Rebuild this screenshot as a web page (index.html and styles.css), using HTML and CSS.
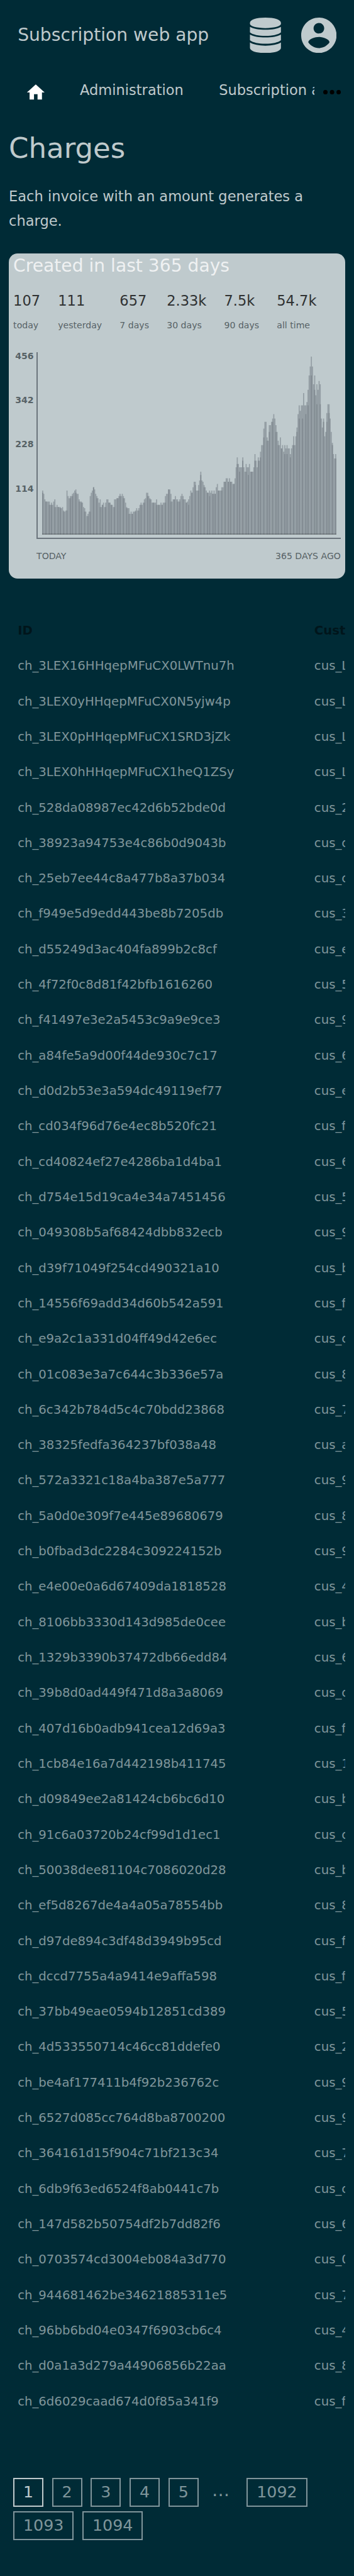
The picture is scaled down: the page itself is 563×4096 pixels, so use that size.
FILE: index.html
```html
<!DOCTYPE html>
<html lang="en">
<head>
<meta charset="utf-8">
<title>Charges</title>
<link rel="stylesheet" href="styles.css">
</head>
<body>
<header class="header">
  <div class="brand">Subscription web app</div>
  <svg class="header-icon" viewBox="-32 0 512 512"><path d="M0 76C0 30 90 0 224 0s224 30 224 76v16c0 34-100 60-224 60S0 126 0 92zM0 133c50 28 130 41 224 41s174-13 224-41v80c-40 33-125 51-224 51S40 246 0 213zM0 246c50 28 130 41 224 41s174-13 224-41v81c-40 33-125 51-224 51S40 360 0 327zM0 360c50 30 130 46 224 46s174-16 224-46v76c0 46-90 76-224 76S0 482 0 436z"/></svg>
  <svg class="header-icon" viewBox="2 2 20 20"><path fill-rule="evenodd" d="M12 2C6.480 2 2 6.480 2 12s4.480 10 10 10 10-4.480 10-10S17.520 2 12 2zm0 3c1.660 0 3 1.340 3 3s-1.340 3-3 3-3-1.340-3-3 1.340-3 3-3zm0 14.200c-2.500 0-4.710-1.280-6-3.220.030-1.990 4-3.080 6-3.080 1.990 0 5.970 1.090 6 3.080-1.290 1.940-3.500 3.220-6 3.220z"/></svg>
</header>
<nav class="nav">
  <div class="nav-items">
    <svg class="home" viewBox="0 0 24 24"><path d="M10 20v-6h4v6h5v-8h3L12 3 2 12h3v8z"/></svg>
    <span>Administration</span>
    <span>Subscription a</span>
  </div>
  <svg class="more" viewBox="0 0 32 8"><circle cx="4" cy="4" r="4"/><circle cx="16" cy="4" r="4"/><circle cx="28" cy="4" r="4"/></svg>
</nav>
<main class="main">
  <h1>Charges</h1>
  <p class="intro">Each invoice with an amount generates a charge.</p>
  <section class="card">
    <h2>Created in last 365 days</h2>
    <div class="stats">
      <div><b>107</b><small>today</small></div>
      <div><b>111</b><small>yesterday</small></div>
      <div><b>657</b><small>7 days</small></div>
      <div><b>2.33k</b><small>30 days</small></div>
      <div><b>7.5k</b><small>90 days</small></div>
      <div><b>54.7k</b><small>all time</small></div>
    </div>
    <div class="chart">
      <div class="y-axis"><span>456</span><span>342</span><span>228</span><span>114</span></div>
      <div class="plot">
        <svg viewBox="0 0 266 161" preserveAspectRatio="none"><path id="bars"/><path id="overlap"/><path d="M0 160h266v1H0z" class="base"/></svg>
      </div>
    </div>
    <div class="x-axis"><span>TODAY</span><span>365 DAYS AGO</span></div>
  </section>
  <table class="table">
    <thead><tr><th>ID</th><th>Cust</th></tr></thead>
    <tbody>
      <tr><td>ch_3LEX16HHqepMFuCX0LWTnu7h</td><td>cus_L</td></tr>
      <tr><td>ch_3LEX0yHHqepMFuCX0N5yjw4p</td><td>cus_L</td></tr>
      <tr><td>ch_3LEX0pHHqepMFuCX1SRD3jZk</td><td>cus_L</td></tr>
      <tr><td>ch_3LEX0hHHqepMFuCX1heQ1ZSy</td><td>cus_L</td></tr>
      <tr><td>ch_528da08987ec42d6b52bde0d</td><td>cus_2</td></tr>
      <tr><td>ch_38923a94753e4c86b0d9043b</td><td>cus_c</td></tr>
      <tr><td>ch_25eb7ee44c8a477b8a37b034</td><td>cus_c</td></tr>
      <tr><td>ch_f949e5d9edd443be8b7205db</td><td>cus_3</td></tr>
      <tr><td>ch_d55249d3ac404fa899b2c8cf</td><td>cus_e</td></tr>
      <tr><td>ch_4f72f0c8d81f42bfb1616260</td><td>cus_5</td></tr>
      <tr><td>ch_f41497e3e2a5453c9a9e9ce3</td><td>cus_9</td></tr>
      <tr><td>ch_a84fe5a9d00f44de930c7c17</td><td>cus_6</td></tr>
      <tr><td>ch_d0d2b53e3a594dc49119ef77</td><td>cus_e</td></tr>
      <tr><td>ch_cd034f96d76e4ec8b520fc21</td><td>cus_f</td></tr>
      <tr><td>ch_cd40824ef27e4286ba1d4ba1</td><td>cus_6</td></tr>
      <tr><td>ch_d754e15d19ca4e34a7451456</td><td>cus_5</td></tr>
      <tr><td>ch_049308b5af68424dbb832ecb</td><td>cus_9</td></tr>
      <tr><td>ch_d39f71049f254cd490321a10</td><td>cus_b</td></tr>
      <tr><td>ch_14556f69add34d60b542a591</td><td>cus_f</td></tr>
      <tr><td>ch_e9a2c1a331d04ff49d42e6ec</td><td>cus_c</td></tr>
      <tr><td>ch_01c083e3a7c644c3b336e57a</td><td>cus_8</td></tr>
      <tr><td>ch_6c342b784d5c4c70bdd23868</td><td>cus_7</td></tr>
      <tr><td>ch_38325fedfa364237bf038a48</td><td>cus_a</td></tr>
      <tr><td>ch_572a3321c18a4ba387e5a777</td><td>cus_9</td></tr>
      <tr><td>ch_5a0d0e309f7e445e89680679</td><td>cus_8</td></tr>
      <tr><td>ch_b0fbad3dc2284c309224152b</td><td>cus_9</td></tr>
      <tr><td>ch_e4e00e0a6d67409da1818528</td><td>cus_4</td></tr>
      <tr><td>ch_8106bb3330d143d985de0cee</td><td>cus_b</td></tr>
      <tr><td>ch_1329b3390b37472db66edd84</td><td>cus_6</td></tr>
      <tr><td>ch_39b8d0ad449f471d8a3a8069</td><td>cus_c</td></tr>
      <tr><td>ch_407d16b0adb941cea12d69a3</td><td>cus_f</td></tr>
      <tr><td>ch_1cb84e16a7d442198b411745</td><td>cus_1</td></tr>
      <tr><td>ch_d09849ee2a81424cb6bc6d10</td><td>cus_b</td></tr>
      <tr><td>ch_91c6a03720b24cf99d1d1ec1</td><td>cus_c</td></tr>
      <tr><td>ch_50038dee81104c7086020d28</td><td>cus_b</td></tr>
      <tr><td>ch_ef5d8267de4a4a05a78554bb</td><td>cus_8</td></tr>
      <tr><td>ch_d97de894c3df48d3949b95cd</td><td>cus_f</td></tr>
      <tr><td>ch_dccd7755a4a9414e9affa598</td><td>cus_f</td></tr>
      <tr><td>ch_37bb49eae0594b12851cd389</td><td>cus_5</td></tr>
      <tr><td>ch_4d533550714c46cc81ddefe0</td><td>cus_2</td></tr>
      <tr><td>ch_be4af177411b4f92b236762c</td><td>cus_9</td></tr>
      <tr><td>ch_6527d085cc764d8ba8700200</td><td>cus_9</td></tr>
      <tr><td>ch_364161d15f904c71bf213c34</td><td>cus_7</td></tr>
      <tr><td>ch_6db9f63ed6524f8ab0441c7b</td><td>cus_c</td></tr>
      <tr><td>ch_147d582b50754df2b7dd82f6</td><td>cus_6</td></tr>
      <tr><td>ch_0703574cd3004eb084a3d770</td><td>cus_0</td></tr>
      <tr><td>ch_944681462be34621885311e5</td><td>cus_7</td></tr>
      <tr><td>ch_96bb6bd04e0347f6903cb6c4</td><td>cus_4</td></tr>
      <tr><td>ch_d0a1a3d279a44906856b22aa</td><td>cus_8</td></tr>
      <tr><td>ch_6d6029caad674d0f85a341f9</td><td>cus_f</td></tr>
    </tbody>
  </table>
  <div class="pages">
    <span class="page current">1</span><span class="page">2</span><span class="page">3</span><span class="page">4</span><span class="page">5</span><span class="gap">…</span><span class="page">1092</span><span class="page">1093</span><span class="page">1094</span>
  </div>
</main>
<script src="chart.js"></script>
</body>
</html>
```
FILE: chart.js
```js
// Column heights of the chart, left to right.
var heights = [
  40,37,32,30,30,30,30,27,29,27,30,32,25,27,25,25,25,24,25,22,21,22,40,35,33,35,35,37,38,40,
  41,37,37,32,30,30,29,25,24,21,17,19,21,35,38,40,43,41,37,35,33,29,32,25,27,29,25,29,32,32,
  29,29,27,27,25,32,32,33,33,35,37,35,37,35,33,29,25,24,24,19,21,19,21,21,22,24,22,24,27,29,
  27,29,32,33,38,38,35,33,32,29,29,29,29,32,27,27,27,29,27,29,29,35,37,37,41,41,37,30,32,32,
  35,32,32,30,32,35,37,35,32,32,29,30,32,35,40,38,43,48,48,40,40,45,49,57,49,48,45,43,40,38,
  38,40,38,40,37,40,37,43,46,40,40,40,43,43,48,48,51,51,48,51,48,48,46,46,51,61,70,64,61,61,
  61,70,61,57,64,61,61,64,57,57,57,61,73,67,61,70,67,75,81,81,96,102,102,88,85,99,99,102,105,109,
  105,99,93,85,81,88,78,81,75,81,78,81,78,78,73,78,81,89,81,89,97,109,117,112,117,117,128,117,117,120,
  131,144,152,161,152,136,144,126,136,131,139,136,105,97,105,89,93,110,118,118,105,93,83,73,69,73
];
// Columns in which two days share the same pixel.
var shared = [
  0,3,6,8,11,14,16,19,22,25,27,30,33,35,38,41,43,46,49,52,54,57,60,62,65,68,70,73,76,78,81,84,87,
  89,92,95,97,100,103,105,108,111,114,116,119,122,124,127,130,132,135,138,141,143,146,149,151,154,
  156,159,162,165,168,170,173,176,178,181,184,186,189,192,195,197,200,203,205,208,211,213,216,219,
  221,224,227,230,232,235,238,240,243,246,248,251,254,257,259,262,265
];
var lower = {
  0:38,30:38,46:43,54:27,114:41,132:27,138:45,143:54,151:35,176:64,178:57,181:67,186:54,192:67,
  195:67,197:70,200:88,205:93,208:102,219:73,221:73,224:70,230:93,232:105,235:105,238:109,
  240:117,243:144,246:131,248:118,251:118,254:102,257:102,259:110,262:81,265:69
};
var base = 161;
var outline = 'M0 ' + base;
heights.forEach(function (h, i) { outline += 'V' + (base - h) + 'H' + (i + 1); });
document.getElementById('bars').setAttribute('d', outline + 'V' + base + 'Z');

var dark = '';
shared.forEach(function (c) {
  var before = c ? heights[c - 1] : heights[c];
  var h = lower[c] || Math.min(heights[c], heights[c + 1], before);
  dark += 'M' + c + ' ' + base + 'v' + (-h) + 'h1v' + h + 'z';
});
document.getElementById('overlap').setAttribute('d', dark);
```
FILE: styles.css
```css
* { box-sizing: border-box; }
html { font-size: 8.8px; overflow: hidden; background: #002b36; }
body {
  margin: 0;
  height: 465.4rem;
  overflow: hidden;
  background: #002b36;
  color: rgba(255, 255, 255, .75);
  font-family: "DejaVu Sans", sans-serif;
  font-size: 2.56rem;
}
svg { display: block; flex: none; }

.header {
  display: flex;
  align-items: center;
  gap: 3.2rem;
  height: 12.8rem;
  padding: 0 3.2rem;
}
.brand { flex: 1; font-size: 3.2rem; line-height: 4rem; padding-bottom: .2rem; }
.header-icon { width: 6.4rem; height: 6.4rem; fill: #bfcacd; }

.nav { display: flex; align-items: center; height: 7rem; padding: 0 2.4rem 0 4.5rem; }
.nav-items { display: flex; align-items: center; flex: 1; overflow: hidden; white-space: nowrap; line-height: 4rem; }
.nav-items span { margin-right: 6.4rem; }
.nav-items span:last-child { margin-right: 0; }
.home { width: 3.84rem; height: 3.84rem; margin: .8rem 6.1rem 0 0; fill: #fff; }
.more { width: 3.2rem; height: .8rem; margin: .6rem 0 0 1.6rem; }

.main { padding: 4rem 1.6rem 0; }
h1, h2 { margin: 0; font-weight: 400; }
h1 { font-size: 5.12rem; line-height: 6.2rem; }
.intro { margin: 3.3rem 0 3.7rem; line-height: 4.4rem; }

.card { height: 58.8rem; padding: 0 .8rem; border-radius: 1.6rem; background: #bfcacd; }
h2 { font-size: 3.2rem; line-height: 4.6rem; }
.stats { display: flex; gap: 3.2rem; margin-top: 1.74rem; }
.stats b { display: block; font-weight: 400; line-height: 4.4rem; color: #303233; }
.stats small { display: block; margin-top: .9rem; font-size: 1.6rem; line-height: 2.8rem; color: #576266; }
.chart { display: flex; margin-top: 3.36rem; font-size: 1.6rem; }
.y-axis { width: 4.2rem; padding-right: .5rem; text-align: right; font-weight: 700; color: #576266; }
.y-axis span { display: block; height: 8rem; line-height: 1.4rem; }
.plot {
  flex: 1;
  height: 33.8rem;
  padding: .8rem .8rem .6rem;
  border-left: 2px solid #6c757d;
  border-bottom: 2px solid #6c757d;
}
.plot svg { width: 100%; height: 32.2rem; }
#bars { fill: #959fa5; }
#overlap { fill: #818a91; }
.base { fill: rgba(0, 0, 0, .25); }
.x-axis {
  display: flex;
  justify-content: space-between;
  padding-left: 4.2rem;
  margin-top: 1.65rem;
  font-size: 1.6rem;
  line-height: 2.8rem;
  color: #576266;
}

.table {
  display: block;
  margin-top: 6.2rem;
  font-size: 2.24rem;
  line-height: 6.4rem;
  color: rgba(255, 255, 255, .5);
}
.table thead, .table tbody { display: block; }
.table tr { display: flex; height: 6.4rem; }
.table th, .table td { flex: 1; padding: 0 0 0 1.6rem; overflow: hidden; text-align: left; white-space: nowrap; }
.table th { color: rgba(0, 0, 0, .5); }
.table th:first-child, .table td:first-child { flex: 0 0 53.6rem; }

.pages { display: flex; flex-wrap: wrap; gap: .8rem 1.58rem; padding: 10.6rem .8rem 0; font-size: 2.88rem; }
.page {
  height: 5.2rem;
  padding: 0 calc(1.6rem - .24px);
  border: 2px solid rgba(255, 255, 255, .5);
  color: rgba(255, 255, 255, .5);
  line-height: 4.6rem;
}
.page.current { border-color: #bfcacd; color: #bfcacd; }
.gap { width: 5.57rem; padding-left: .85rem; font-size: 3.2rem; line-height: 4.6rem; color: rgba(255, 255, 255, .5); }
```
